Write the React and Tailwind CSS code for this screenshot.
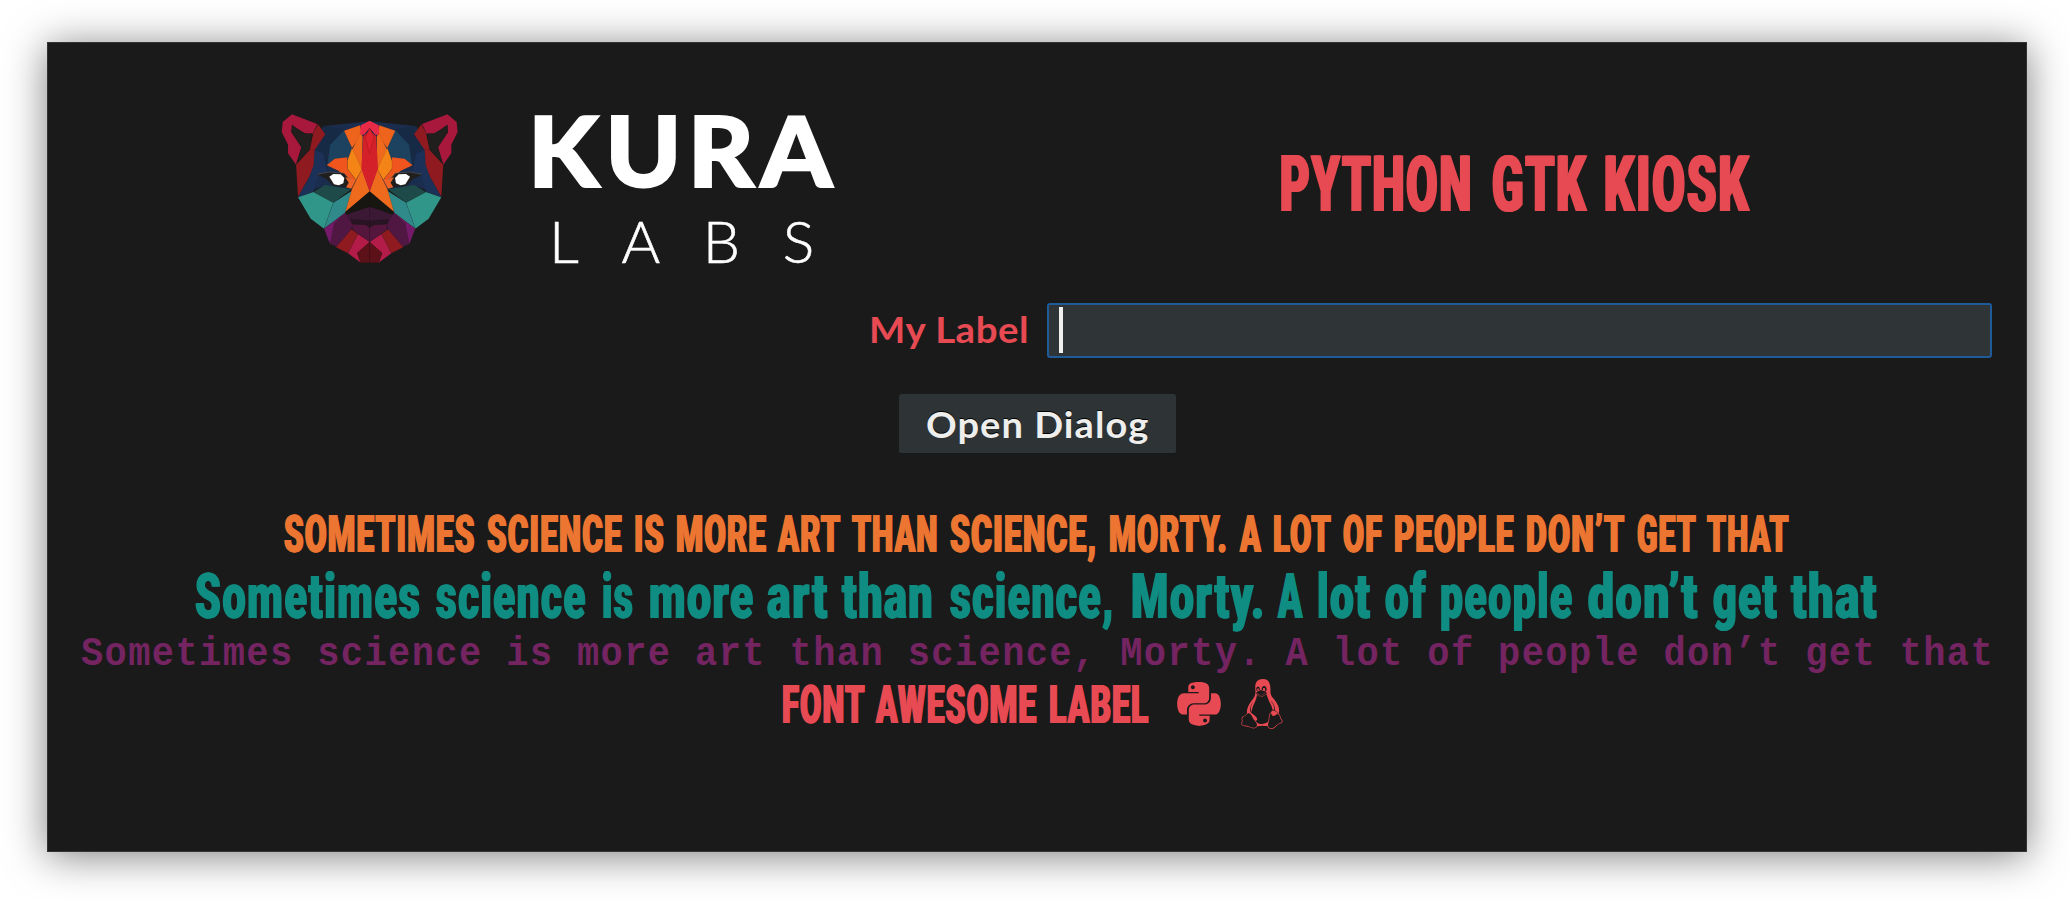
import { useLayoutEffect, useRef, useState } from "react";
import { FaLinux, FaPython } from "react-icons/fa";

// Horizontally condenses or widens a run of text so it fills `width`.
function Fit({ text, width, gap = 0 }) {
  const ref = useRef(null);
  const [scale, setScale] = useState(1);
  useLayoutEffect(() => {
    const measure = () => setScale(width / ref.current.offsetWidth);
    measure();
    document.fonts.ready.then(measure);
  }, [width, text]);
  return (
    <span className="flex shrink-0" style={{ width, marginLeft: gap }}>
      <span
        ref={ref}
        className="shrink-0 origin-left whitespace-pre"
        style={{ transform: `scaleX(${scale})` }}
      >
        {text}
      </span>
    </span>
  );
}

function Words({ items, className }) {
  return (
    <p className={`flex items-center font-['Roboto',sans-serif] font-black ${className}`}>
      {items.map(([text, start, end], i) => (
        <Fit
          key={i}
          text={text}
          width={end - start + 1}
          gap={i ? start - items[i - 1][2] - 1 : 0}
        />
      ))}
    </p>
  );
}

const TITLE = [["PYTHON", 1281, 1473], ["GTK", 1492.5, 1587], ["KIOSK", 1605, 1750.5]];
const UPPER = [
  ["SOMETIMES", 284.5, 475], ["SCIENCE", 487, 621.5], ["IS", 634, 664], ["MORE", 676, 766],
  ["ART", 778, 840.5], ["THAN", 852.5, 938], ["SCIENCE,", 950, 1096], ["MORTY.", 1109, 1227],
  ["A", 1240, 1261], ["LOT", 1273, 1331], ["OF", 1343, 1382], ["PEOPLE", 1394.5, 1514],
  ["DON’T", 1526.5, 1625], ["GET", 1637, 1696], ["THAT", 1707, 1788.5],
];
const MIXED = [
  ["Sometimes", 195.5, 421], ["science", 437, 587], ["is", 602.5, 634], ["more", 650, 754.5],
  ["art", 768, 829], ["than", 843, 934], ["science,", 951, 1114.5], ["Morty.", 1131.5, 1265],
  ["A", 1278.5, 1303], ["lot", 1318, 1371.5], ["of", 1386, 1427], ["people", 1441, 1573.5],
  ["don’t", 1588.5, 1698.5], ["get", 1713.5, 1778], ["that", 1792, 1878],
];
const AWESOME = [["FONT", 782, 864.5], ["AWESOME", 876, 1036.5], ["LABEL", 1049, 1148.5]];

const FACETS = [
  ["#1b2d4e", "299,64 160,78 120,150 84,292 150,262 245,270 299,270"],
  ["#172a45", "160,78 222,88 180,135 172,190 172,205 150,160 134,155 166,104"],
  ["#1c4260", "222,90 246,142 234,178 190,182 172,195 180,135"],
  ["#1b3158", "134,150 160,160 172,215 146,226 130,275 84,292 118,230"],
  ["#a8183d", "66,43 142,72 128,102 104,100 82,86 66,74 64,96 94,142 78,194 54,160 54,134 35,96 38,66"],
  ["#211e1e", "66,76 84,88 108,102 126,100 118,150 80,190 95,142 65,97"],
  ["#8f1a20", "144,73 166,103 134,150 119,150 130,98"],
  ["#8f1a20", "119,150 134,150 131,196 118,230 84,290 78,194"],
  ["#ee641c", "222,92 270,76 276,104 246,144"],
  ["#ef6a1c", "272,98 278,110 276,210 246,150"],
  ["#f58416", "246,144 276,208 258,240 232,206 232,182"],
  ["#ef551d", "170,196 194,176 232,172 232,206 258,240 246,262 226,228 205,212"],
  ["#211e1e", "140,223 176,216 222,220 244,246 234,262 190,258 168,236"],
  ["#ef6426", "226,232 258,238 244,266 228,262 236,248"],
  ["#1e4b49", "166,254 206,262 244,268 190,308 130,276"],
  ["#31968a", "84,292 130,276 190,308 162,386 122,356"],
  ["#308a8a", "190,308 246,272 226,338 162,386"],
  ["#ee6a1d", "276,206 299,274 226,336 246,266"],
  ["#181611", "299,276 299,322 232,344 226,336"],
  ["#3b1834", "299,320 299,374 246,372 228,344"],
  ["#741a69", "162,386 226,338 180,432"],
  ["#511743", "226,338 248,374 244,388 200,440 180,432 192,370"],
  ["#54163c", "246,372 299,374 299,426 248,390"],
  ["#281422", "242,358 299,362 299,384 286,374 246,372"],
  ["#8f1a20", "244,388 264,402 234,460 198,442"],
  ["#b31c49", "264,402 299,426 262,460 272,488 234,460"],
  ["#5b1117", "299,426 299,488 272,488 262,458"],
];

function Half() {
  return (
    <g>
      {FACETS.map(([fill, points], i) => (
        <polygon key={i} points={points} fill={fill} stroke="#1a1a1a" strokeOpacity="0.2" strokeWidth="1.2" />
      ))}
      <path d="M178 230L190 222L212 223L223 234L220 250L206 256L192 253Z" fill="#fff" />
      <path d="M142 223L178 216L222 219L242 240" fill="none" stroke="#666" strokeWidth="1.5" />
    </g>
  );
}

function Panther() {
  return (
    <svg className="mt-[4px] h-[180px] w-[200px] shrink-0" viewBox="0 0 600 540">
      <Half />
      <g transform="translate(598 0) scale(-1 1)">
        <Half />
      </g>
      <polygon points="299,92 318,108 324,206 299,274 274,206 280,108" fill="#d42029" />
      <polygon points="299,62 326,76 328,104 316,104 299,84 282,104 270,104 272,76" fill="#ea2b47" />
      <polygon points="299,84 312,112 299,162 286,112" fill="#df222c" stroke="#a5151f" strokeWidth="1.5" />
    </svg>
  );
}

export default function App() {
  return (
    <main className="h-[900px] w-[2070px] overflow-hidden bg-white pt-[42px] pl-[47px]">
      <section className="flex h-[810px] w-[1980px] flex-col border border-[#333] bg-[#1a1a1a] shadow-[0_4px_38px_rgba(0,0,0,0.5)]">
        <header className="flex h-[240px] shrink-0 items-start pt-[53px] pl-[222px]">
          <Panther />
          <div className="flex w-[380px] flex-col pl-[58px] font-['Lato',sans-serif] text-white">
            <div className="mt-[1px] flex h-[104px] items-center text-[98px] leading-none font-black tracking-[6px] [-webkit-text-stroke:2px_white]">
              <Fit text="KURA" width={311} />
            </div>
            <div className="mt-[5px] flex h-[70px] items-center pl-[21px] text-[58px] leading-none font-light tracking-[42px] [-webkit-text-stroke:0.6px_white]">
              <Fit text="LABS" width={308} />
            </div>
          </div>
          <Words
            items={TITLE}
            className="mt-[48px] h-[82px] pl-[430px] text-[78px] leading-none tracking-[3px] text-[#e74a52] [text-shadow:2px_0_currentColor,-2px_0_currentColor]"
          />
        </header>

        <div className="flex h-[56px] shrink-0 items-center pt-[39px] pl-[820px]">
          <label htmlFor="entry" className="mb-[2px] flex w-[179px] pl-[1px] font-['Lato',sans-serif] text-[36.5px] leading-none font-bold tracking-[0.5px] text-[#e74a52]">
            <Fit text="My Label" width={160} />
          </label>
          <div id="entry" className="flex h-[55px] w-[945px] shrink-0 items-center rounded-[3px] border-2 border-[#1f5a99] bg-[#2f3437] pl-[10px]">
            <i className="mb-[2px] h-[46px] w-[4px] bg-[#f0f0ee]" />
          </div>
        </div>

        <button className="mt-[55px] ml-[850.5px] flex h-[61px] w-[277px] shrink-0 items-center justify-center rounded-[3px] border-b-2 border-black/50 bg-[#2e3436] pt-[1px] font-['Lato',sans-serif] text-[36.5px] leading-none font-bold tracking-[1px] text-[#eeeeec] [text-shadow:0_-1px_#000]">
          <Fit text="Open Dialog" width={223} />
        </button>

        <div className="mt-[51px] flex flex-col">
          <Words items={UPPER} className="h-[56px] pl-[236px] text-[52.5px] leading-none tracking-[2px] text-[#ec7532] [text-shadow:1.3px_0_currentColor,-1.3px_0_currentColor]" />
          <Words items={MIXED} className="h-[66px] pt-[2px] pl-[146.5px] text-[63px] leading-none tracking-[2.5px] text-[#108d82] [text-shadow:1.2px_0_currentColor,-1.2px_0_currentColor]" />
          <p className="flex h-[52px] items-center pl-[32.5px] font-['Liberation_Mono',monospace] text-[40.5px] leading-none font-bold tracking-[1.5px] text-[#752462]">
            <Fit text="Sometimes science is more art than science, Morty. A lot of people don’t get that" width={1913} />
          </p>
          <div className="mt-[2px] flex h-[46px] items-center pl-[733.5px] text-[#e74a52]">
            <Words items={AWESOME} className="text-[54px] leading-none tracking-[2px] [text-shadow:1.3px_0_currentColor,-1.3px_0_currentColor]" />
            <FaPython className="mb-[2px] ml-[28px] h-[50px] w-[44px] shrink-0" />
            <FaLinux className="mb-[2px] ml-[18.5px] h-[50px] w-[44px] shrink-0" />
          </div>
        </div>
      </section>
    </main>
  );
}
